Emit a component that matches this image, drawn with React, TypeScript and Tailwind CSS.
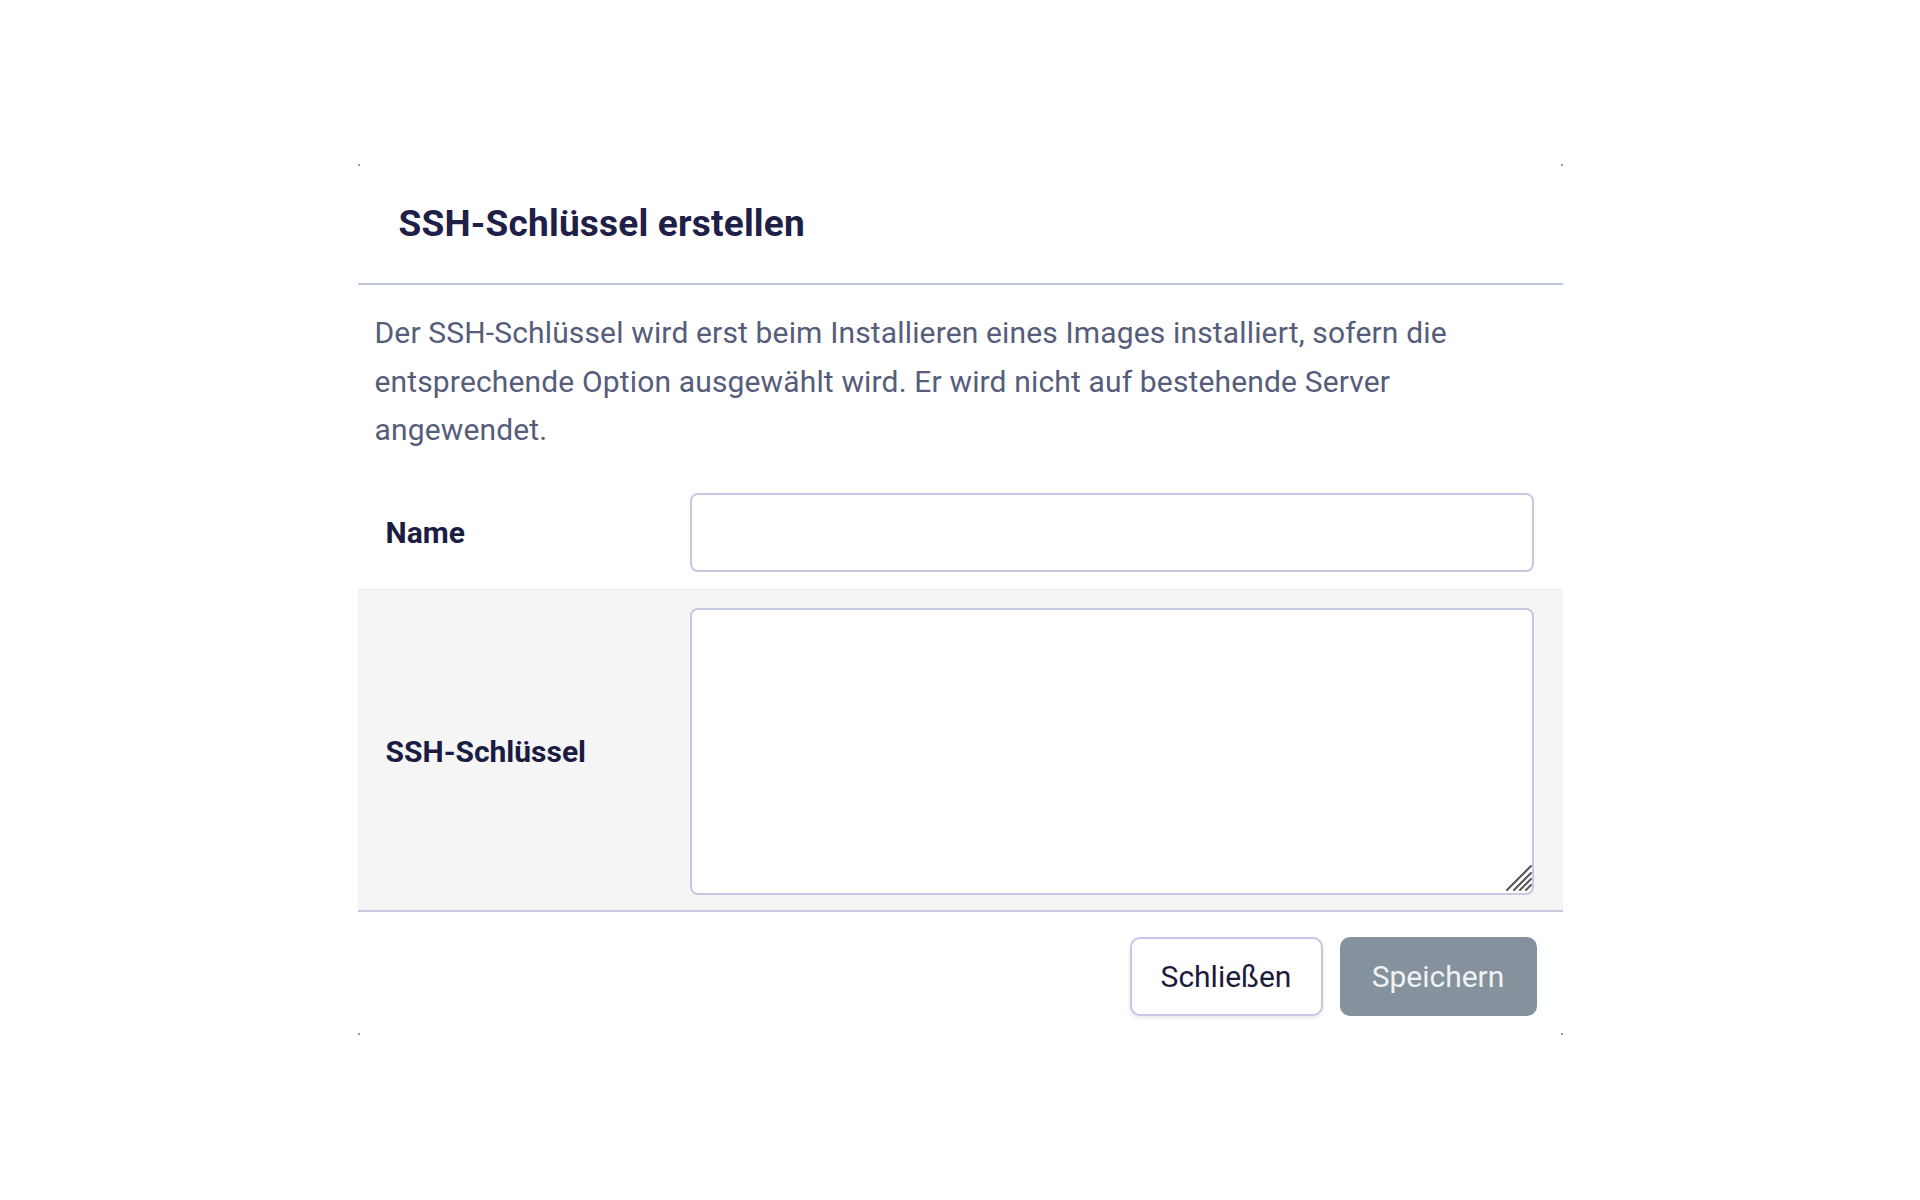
import React from "react";

export default function App() {
  return (
    <div className="min-h-screen bg-white flex justify-center items-start pt-[164px] font-['Roboto',sans-serif]">
      <div className="relative w-[1205px] bg-white">
        <span className="absolute left-0 top-0 w-[2px] h-[2px] bg-[#9a9a9a]" />
        <span className="absolute right-0 top-0 w-[2px] h-[2px] bg-[#9a9a9a]" />
        <span className="absolute left-0 bottom-0 w-[2px] h-[2px] bg-[#9a9a9a]" />
        <span className="absolute right-0 bottom-0 w-[2px] h-[2px] bg-[#9a9a9a]" />

        <div className="h-[121px] flex items-center pl-[41px] border-b-2 border-[#c3c9db]">
          <h2 className="font-bold text-[37px] text-[#1e2047] tracking-[0.2px]">
            SSH-Schlüssel erstellen
          </h2>
        </div>

        <div className="pl-[17px] pt-[24px] pb-[22px] text-[30px] leading-[48.5px] tracking-[0.15px] text-[#555d7a] whitespace-nowrap">
          Der SSH-Schlüssel wird erst beim Installieren eines Images installiert, sofern die
          <br />
          entsprechende Option ausgewählt wird. Er wird nicht auf bestehende Server
          <br />
          angewendet.
        </div>

        <div className="grid grid-cols-[332px_1fr] items-center border-b border-[#ebebeb] pt-[16px] pb-[17px] pr-[29px]">
          <label className="pl-[28px] font-bold text-[30px] text-[#1b1c42]">
            Name
          </label>
          <input
            type="text"
            className="h-[79px] w-full rounded-[8px] border-2 border-[#c5c8e3] bg-white px-4 text-[27px] outline-none"
          />
        </div>

        <div className="grid grid-cols-[332px_1fr] items-center bg-[#f5f5f5] pt-[18px] pb-[15px] pr-[29px]">
          <label className="pl-[28px] font-bold text-[30px] text-[#1b1c42]">
            SSH-Schlüssel
          </label>
          <div className="relative">
            <textarea className="h-[287px] w-full rounded-[8px] border-2 border-[#c5c8e3] bg-white px-4 py-3 text-[27px] outline-none block resize-none" />
            <svg
              className="absolute right-[2px] bottom-[4px] pointer-events-none"
              width="26"
              height="26"
              viewBox="0 0 26 26"
            >
              <g stroke="#555" strokeWidth="2" strokeLinecap="round">
                <line x1="1" y1="25" x2="25" y2="1" />
                <line x1="8" y1="25" x2="25" y2="8" />
                <line x1="14" y1="25" x2="25" y2="14" />
                <line x1="20" y1="25" x2="25" y2="20" />
              </g>
            </svg>
          </div>
        </div>

        <div className="border-t-2 border-[#c9c6de] flex justify-end gap-[17px] pt-[25px] pb-[19px] pr-[26px]">
          <button className="w-[193px] h-[79px] rounded-[10px] border-2 border-[#c7c6e6] bg-white text-[30px] text-[#1c1b3c] shadow-[0_2px_4px_rgba(120,120,170,0.18)]">
            Schließen
          </button>
          <button className="w-[197px] h-[79px] rounded-[10px] bg-[#85919c] text-[30px] text-[#f0f2f4]">
            Speichern
          </button>
        </div>
      </div>
    </div>
  );
}
